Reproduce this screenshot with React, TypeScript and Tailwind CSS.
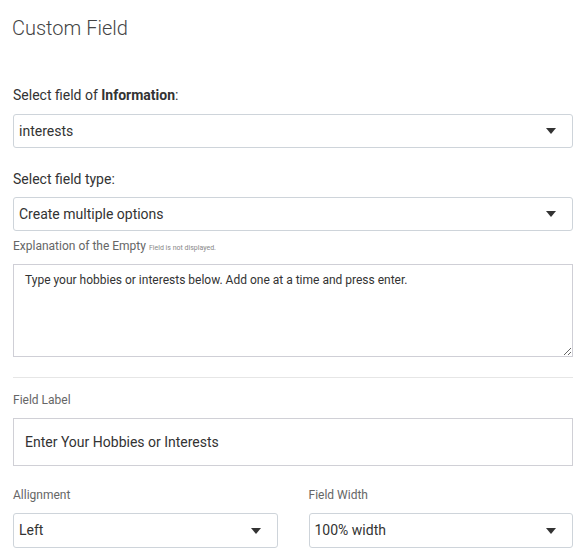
import { ReactNode } from "react";

function Caret() {
  return (
    <svg width="10" height="6" viewBox="0 0 10 6" className="shrink-0">
      <path d="M0 0 H10 L5 6 Z" fill="#333" />
    </svg>
  );
}

function SelectBox({ value, className = "" }: { value: string; className?: string }) {
  return (
    <div
      className={`flex items-center justify-between h-[34px] border border-[#ced4da] rounded-[3px] bg-white pl-[5px] pr-[16px] text-[14px] text-[#333] ${className}`}
    >
      <span>{value}</span>
      <Caret />
    </div>
  );
}

function SmallLabel({ children }: { children: ReactNode }) {
  return <div className="h-4 leading-4 text-[12px] text-[#666]">{children}</div>;
}

export default function App() {
  return (
    <div
      className="w-[586px] h-[559px] bg-white overflow-hidden pl-[13px] pr-[13px] pt-[14px]"
      style={{ fontFamily: "Roboto, 'Liberation Sans', sans-serif" }}
    >
      <h1 className="h-7 leading-7 text-[20px] font-light text-[#444] -ml-px">Custom Field</h1>

      <div className="mt-[43px] h-5 leading-5 text-[14px] text-[#333]">
        Select field of <span className="font-bold">Information</span>:
      </div>
      <SelectBox value="interests" className="mt-[9px]" />

      <div className="mt-[21px] h-5 leading-5 text-[14px] text-[#333]">Select field type:</div>
      <SelectBox value="Create multiple options" className="mt-[8px]" />

      <div className="mt-[7px] h-4 leading-4 text-[12px] text-[#666]">
        Explanation of the Empty <span className="text-[7px] text-[#888]">Field is not displayed.</span>
      </div>
      <textarea
        className="mt-[10px] block w-full h-[93px] border border-[#cfcfd6] bg-white px-[11px] py-[6px] text-[12px] text-[#333] outline-none"
        defaultValue="Type your hobbies or interests below. Add one at a time and press enter."
      />

      <div className="mt-[20px] border-t border-[#e6e6e6]" />

      <div className="mt-[14px]">
        <SmallLabel>Field Label</SmallLabel>
      </div>
      <div className="mt-[10px] flex items-center h-[48px] border border-[#d0d0d6] bg-white px-[11px] text-[14px] text-[#333]">
        Enter Your Hobbies or Interests
      </div>

      <div className="mt-[21px] grid grid-cols-2 gap-x-[31px]">
        <div>
          <SmallLabel>Allignment</SmallLabel>
          <SelectBox value="Left" className="mt-[10px] h-[35px]" />
        </div>
        <div>
          <SmallLabel>Field Width</SmallLabel>
          <SelectBox value="100% width" className="mt-[10px] h-[35px]" />
        </div>
      </div>
    </div>
  );
}
